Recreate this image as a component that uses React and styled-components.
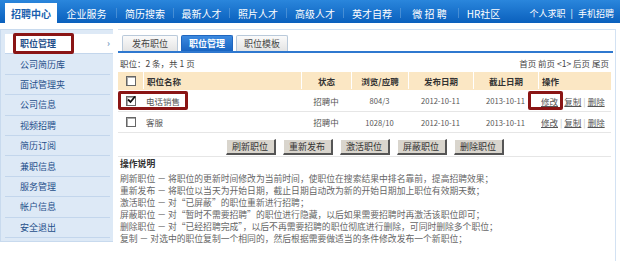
import React from "react";
import styled, { createGlobalStyle } from "styled-components";

const Global = createGlobalStyle`
  html, body { margin: 0; padding: 0; background: #fff; }
  body { font-family: "Noto Sans CJK SC", "Liberation Sans", sans-serif; font-size: 9px; color: #444; }
`;

const Page = styled.div`
  width: 620px;
  height: 261px;
  overflow: hidden;
  background: #fff;
`;

const Nav = styled.div`
  height: 23px;
  display: flex;
  align-items: flex-end;
  padding-left: 5px;
  background: linear-gradient(#2a86dc, #0a60bd);
`;

const NavItem = styled.div`
  height: 20px;
  display: flex;
  align-items: center;
  justify-content: center;
  width: ${(p) => p.$w || 58}px;
  font-size: 10px;
  color: ${(p) => (p.$active ? "#1a5fae" : "#fff")};
  font-weight: ${(p) => (p.$active ? 700 : 400)};
  background: ${(p) => (p.$active ? "#fff" : "transparent")};
`;

const NavSep = styled.span`
  width: 1px;
  height: 10px;
  margin-bottom: 5px;
  background: #5a9ad9;
  opacity: 0.7;
`;

const NavRight = styled.div`
  margin-left: auto;
  height: 20px;
  display: flex;
  align-items: center;
  gap: 5px;
  padding-right: 6px;
  color: #fff;
  font-size: 9px;
`;

const Body = styled.div`
  display: flex;
  margin-top: 6px;
  align-items: flex-start;
`;

const Sidebar = styled.div`
  width: 108px;
  padding: 4px 0 3px 4px;
  background: #dde9f6;
  border: 1px solid #c8daee;
  border-right: none;
`;

const SideItem = styled.div`
  height: 19.4px;
  border-bottom: 1px solid #c3d6ec;
  display: flex;
  align-items: center;
  padding-left: ${(p) => (p.$active ? 8 : 15)}px;
  color: #1f4f8a;
  font-size: 9px;
  font-weight: ${(p) => (p.$active ? 700 : 400)};
  background: ${(p) => (p.$active ? "#fff" : "transparent")};
  margin-right: ${(p) => (p.$active ? 0 : 3)}px;
  justify-content: space-between;
`;

const RedText = styled.span`
  border: 3px solid #8a1515;
  border-radius: 2px;
  padding: 1px 15px 1px 4px;
`;

const Chevron = styled.span`
  color: #7a9cc4;
  padding-right: 3px;
  font-size: 9px;
`;

const Content = styled.div`
  flex: 1;
  margin-left: 5px;
  margin-right: 4px;
  border-top: 1px solid #d3e2f3;
  border-right: 1px solid #d3e2f3;
  height: 232px;
`;

const Tabs = styled.div`
  display: flex;
  gap: 3px;
  padding: 5px 0 0 4px;
  border-bottom: 2px solid #2f78cf;
  margin-right: 2px;
`;

const Tab = styled.div`
  width: ${(p) => p.$w}px;
  height: 15px;
  display: flex;
  align-items: center;
  justify-content: center;
  font-size: 9px;
  color: ${(p) => (p.$active ? "#fff" : "#444")};
  font-weight: ${(p) => (p.$active ? 700 : 400)};
  background: ${(p) => (p.$active ? "linear-gradient(#3c8ae0,#1864c2)" : "linear-gradient(#fafafa,#e4e4e4)")};
  border: 1px solid ${(p) => (p.$active ? "#1f66bf" : "#b9c9da")};
  border-bottom: none;
  border-radius: 2px 2px 0 0;
`;

const InfoRow = styled.div`
  height: 19px;
  display: flex;
  align-items: center;
  justify-content: space-between;
  padding: 0 6px 0 2px;
  font-size: 8.5px;
  color: #444;
`;

const Table = styled.div`
  margin-right: 4px;
`;

const Row = styled.div`
  position: relative;
  display: grid;
  grid-template-columns: 25px 158px 50px 57px 65px 65px 1fr;
  height: ${(p) => p.$h}px;
  align-items: center;
  background: ${(p) => (p.$head ? "#fbe7c4" : "#fff")};
  border-bottom: 1px solid ${(p) => (p.$head ? "#fbe7c4" : "#e6e6e6")};
  font-weight: ${(p) => (p.$head ? 700 : 400)};
  color: ${(p) => (p.$head ? "#333" : "#555")};
  font-size: 8.5px;
`;

const Cell = styled.div`
  height: 100%;
  display: flex;
  align-items: center;
  white-space: nowrap;
  justify-content: ${(p) => (p.$left ? "flex-start" : "center")};
  padding-left: ${(p) => (p.$left ? 3 : 0)}px;
  border-left: ${(p) => (p.$head && !p.$first ? "1px solid #fff" : "none")};
  font-size: ${(p) => (p.$num ? 7.6 : 8.5)}px;
  gap: 2px;
`;

const Box = styled.span`
  width: 8px;
  height: 8px;
  border: 1px solid #666;
  background: #fff;
  box-shadow: inset 1px 1px 0 #aaa;
  position: relative;
  display: inline-flex;
  align-items: center;
  justify-content: center;
`;

const Overlay = styled.div`
  position: absolute;
  left: ${(p) => p.$x}px;
  top: 1px;
  width: ${(p) => p.$w}px;
  height: 19px;
  border: 3px solid #8a1515;
  border-radius: 2px;
  box-sizing: border-box;
  pointer-events: none;
`;

const OpLink = styled.span`
  color: #555;
  text-decoration: underline;
`;

const OpSep = styled.span`
  color: #bbb;
`;

const ButtonsRow = styled.div`
  border-bottom: 1px solid #e6e6e6;
  display: flex;
  justify-content: center;
  gap: 7px;
  padding: 6px 0 1px 0;
  margin-right: 4px;
`;

const Button = styled.div`
  width: 47px;
  height: 13px;
  display: flex;
  align-items: center;
  justify-content: center;
  background: #d9d5cd;
  border-top: 1px solid #fff;
  border-left: 1px solid #fff;
  border-right: 2px solid #555;
  border-bottom: 2px solid #555;
  font-size: 9px;
  color: #333;
`;

const Help = styled.div`
  padding: 0 0 0 2px;
  font-size: 8.8px;
  color: #666;
`;

const HelpTitle = styled.div`
  font-weight: 700;
  color: #333;
  line-height: 13px;
`;

const HelpLines = styled.div`
  margin-top: 3px;
  line-height: 12px;
`;

const navItems = [
  ["企业服务", 60],
  ["简历搜索", 57],
  ["最新人才", 56],
  ["照片人才", 57],
  ["高级人才", 57],
  ["英才自荐", 57],
  ["微 招 聘", 58],
  ["HR社区", 50, true],
];

const sideItems = ["公司简历库", "面试管理夹", "公司信息", "视频招聘", "简历订阅", "兼职信息", "服务管理", "帐户信息", "安全退出"];

const rows = [
  { name: "电话销售", views: "804/3", checked: true },
  { name: "客服", views: "1028/10" },
];

const helpLines = [
  "刷新职位 － 将职位的更新时间修改为当前时间，使职位在搜索结果中排名靠前，提高招聘效果；",
  "重新发布 － 将职位以当天为开始日期，截止日期自动改为新的开始日期加上职位有效期天数；",
  "激活职位 － 对“已屏蔽”的职位重新进行招聘；",
  "屏蔽职位 － 对“暂时不需要招聘”的职位进行隐藏，以后如果需要招聘时再激活该职位即可；",
  "删除职位 － 对“已经招聘完成”，以后不再需要招聘的职位彻底进行删除，可同时删除多个职位；",
  "复制 － 对选中的职位复制一个相同的，然后根据需要做适当的条件修改发布一个新职位；",
];

const CheckMark = () => (
  <svg width="9" height="9" viewBox="0 0 9 9" style={{ position: "absolute", left: 0, top: -2 }}>
    <path d="M1 4.5 L3.5 7 L8 1.5" stroke="#111" strokeWidth="1.8" fill="none" />
  </svg>
);

export default function App() {
  return (
    <Page>
      <Global />
      <Nav>
        <NavItem $active $w={52}>招聘中心</NavItem>
        {navItems.map(([t, w, last]) => (
          <React.Fragment key={t}>
            <NavItem $w={w - 1}>{t}</NavItem>
            {!last && <NavSep />}
          </React.Fragment>
        ))}
        <NavRight>
          <span>个人求职</span>
          <span>|</span>
          <span>手机招聘</span>
        </NavRight>
      </Nav>
      <Body>
        <Sidebar>
          <SideItem $active>
            <RedText>职位管理</RedText>
            <Chevron>›</Chevron>
          </SideItem>
          {sideItems.map((s) => (
            <SideItem key={s}>{s}</SideItem>
          ))}
        </Sidebar>
        <Content>
          <Tabs>
            <Tab $w={54}>发布职位</Tab>
            <Tab $w={50} $active>职位管理</Tab>
            <Tab $w={50}>职位模板</Tab>
          </Tabs>
          <InfoRow>
            <span>职位：2 条，共 1 页</span>
            <span>首页 前页 &lt;1&gt; 后页 尾页</span>
          </InfoRow>
          <Table>
            <Row $head $h={17}>
              <Cell $head $first><Box /></Cell>
              <Cell $head $left>职位名称</Cell>
              <Cell $head>状态</Cell>
              <Cell $head>浏览/应聘</Cell>
              <Cell $head>发布日期</Cell>
              <Cell $head>截止日期</Cell>
              <Cell $head $left>操作</Cell>
            </Row>
            {rows.map((r, i) => (
              <Row key={r.name} $h={i === 0 ? 21 : 20}>
                <Cell><Box>{r.checked && <CheckMark />}</Box></Cell>
                <Cell $left>{r.name}</Cell>
                <Cell>招聘中</Cell>
                <Cell $num>{r.views}</Cell>
                <Cell $num>2012-10-11</Cell>
                <Cell $num>2013-10-11</Cell>
                <Cell $left>
                  <OpLink>修改</OpLink>
                  <OpSep>|</OpSep>
                  <OpLink>复制</OpLink>
                  <OpSep>|</OpSep>
                  <OpLink>删除</OpLink>
                </Cell>
                {r.checked && (
                  <>
                    <Overlay $x={0} $w={70} />
                    <Overlay $x={410} $w={35} />
                  </>
                )}
              </Row>
            ))}
          </Table>
          <ButtonsRow>
            <Button>刷新职位</Button>
            <Button>重新发布</Button>
            <Button>激活职位</Button>
            <Button>屏蔽职位</Button>
            <Button>删除职位</Button>
          </ButtonsRow>
          <Help>
            <HelpTitle>操作说明</HelpTitle>
            <HelpLines>
              {helpLines.map((l) => (
                <div key={l}>{l}</div>
              ))}
            </HelpLines>
          </Help>
        </Content>
      </Body>
    </Page>
  );
}
